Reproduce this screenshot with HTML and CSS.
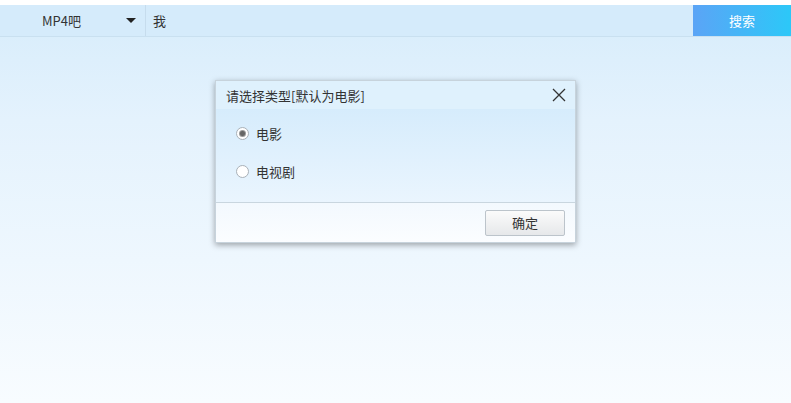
FILE: index.html
```html
<!DOCTYPE html>
<html lang="zh-CN">
<head>
  <meta charset="UTF-8" />
  <title>搜索</title>
  <link rel="stylesheet" href="styles.css">
</head>
<body>
  <div class="topbar">
    <div class="select">
      <span class="select-text">MP4吧</span>
      <span class="caret"></span>
    </div>
    <div class="query">我</div>
    <div class="search-btn">搜索</div>
  </div>

  <div class="stage">
    <div class="dialog">
      <div class="dialog-head">
        <span class="dialog-title">请选择类型[默认为电影]</span>
        <svg class="close" width="14" height="14" viewBox="0 0 14 14">
          <path d="M1 1 L13 13 M13 1 L1 13" stroke="#333" stroke-width="1.3" fill="none"/>
        </svg>
      </div>
      <div class="dialog-body">
        <label class="radio-row"><span class="radio checked"></span>电影</label>
        <label class="radio-row"><span class="radio"></span>电视剧</label>
      </div>
      <div class="dialog-foot">
        <div class="btn">确定</div>
      </div>
    </div>
  </div>
</body>
</html>
```

FILE: styles.css
```css
html, body {
  margin: 0;
  height: 100%;
}

body {
  font-family: "Noto Sans CJK SC", "Liberation Sans", sans-serif;
  font-size: 13px;
  color: #333;
  background: linear-gradient(to bottom, #d6ecfb 0px, #e4f2fd 120px, #eef7fe 260px, #f8fcff 403px);
  padding-top: 5px;
  box-sizing: border-box;
  position: relative;
}

body::before {
  content: "";
  position: absolute;
  left: 0;
  right: 0;
  top: 0;
  height: 5px;
  background: #fff;
}

.topbar {
  display: flex;
  height: 31px;
  border-bottom: 1px solid #c9e0f0;
  background: #d5ebfb;
  align-items: stretch;
}

.select {
  width: 146px;
  border-right: 1px solid #c6dced;
  display: flex;
  align-items: center;
  padding-left: 42px;
  box-sizing: border-box;
  justify-content: space-between;
  padding-right: 9px;
}

.select-text {
  font-size: 13px;
}

.caret {
  width: 0;
  height: 0;
  border-left: 5px solid transparent;
  border-right: 5px solid transparent;
  border-top: 5px solid #222;
}

.query {
  flex: 1;
  display: flex;
  align-items: center;
  padding-left: 7px;
}

.search-btn {
  width: 98px;
  display: flex;
  align-items: center;
  justify-content: center;
  color: #fff;
  font-size: 13px;
  background: linear-gradient(to right, #5ba4f6, #2cc8f8);
}

.stage {
  display: flex;
  justify-content: center;
  padding-top: 43px;
}

.dialog {
  width: 359px;
  border: 1px solid #c7d3dc;
  box-shadow: 0 2px 6px rgba(0, 0, 0, 0.35);
  background: linear-gradient(to bottom, #dcf0fd 0px, #e7f4fd 60px, #eef7fe 120px);
}

.dialog-head {
  height: 28px;
  display: flex;
  align-items: center;
  justify-content: space-between;
  padding: 0 9px 0 10px;
  background: #dff1fd;
}

.dialog-title {
  font-size: 13px;
}

.dialog-body {
  height: 94px;
  padding: 14px 0 0 20px;
  box-sizing: border-box;
  border-bottom: 1px solid #c9d6df;
  background: linear-gradient(to bottom, #d6ecfc, #eaf5fe);
}

.radio-row {
  display: flex;
  align-items: center;
  height: 20px;
  margin-bottom: 18px;
}

.radio {
  width: 11px;
  height: 11px;
  border-radius: 50%;
  border: 1px solid #a9b1b8;
  background: #fff;
  margin-right: 7px;
  position: relative;
}

.radio.checked::after {
  content: "";
  position: absolute;
  left: 2px;
  top: 2px;
  width: 7px;
  height: 7px;
  border-radius: 50%;
  background: radial-gradient(circle, #666 0, #666 2px, #999 3px);
}

.dialog-foot {
  height: 39px;
  display: flex;
  align-items: center;
  justify-content: flex-end;
  padding-right: 10px;
  background: linear-gradient(to bottom, #f3f9fe, #fbfdff);
}

.btn {
  width: 78px;
  height: 24px;
  border: 1px solid #bcc4cb;
  border-radius: 2px;
  display: flex;
  align-items: center;
  justify-content: center;
  background: linear-gradient(to bottom, #fbfbfb, #e6e8ea);
}
```
